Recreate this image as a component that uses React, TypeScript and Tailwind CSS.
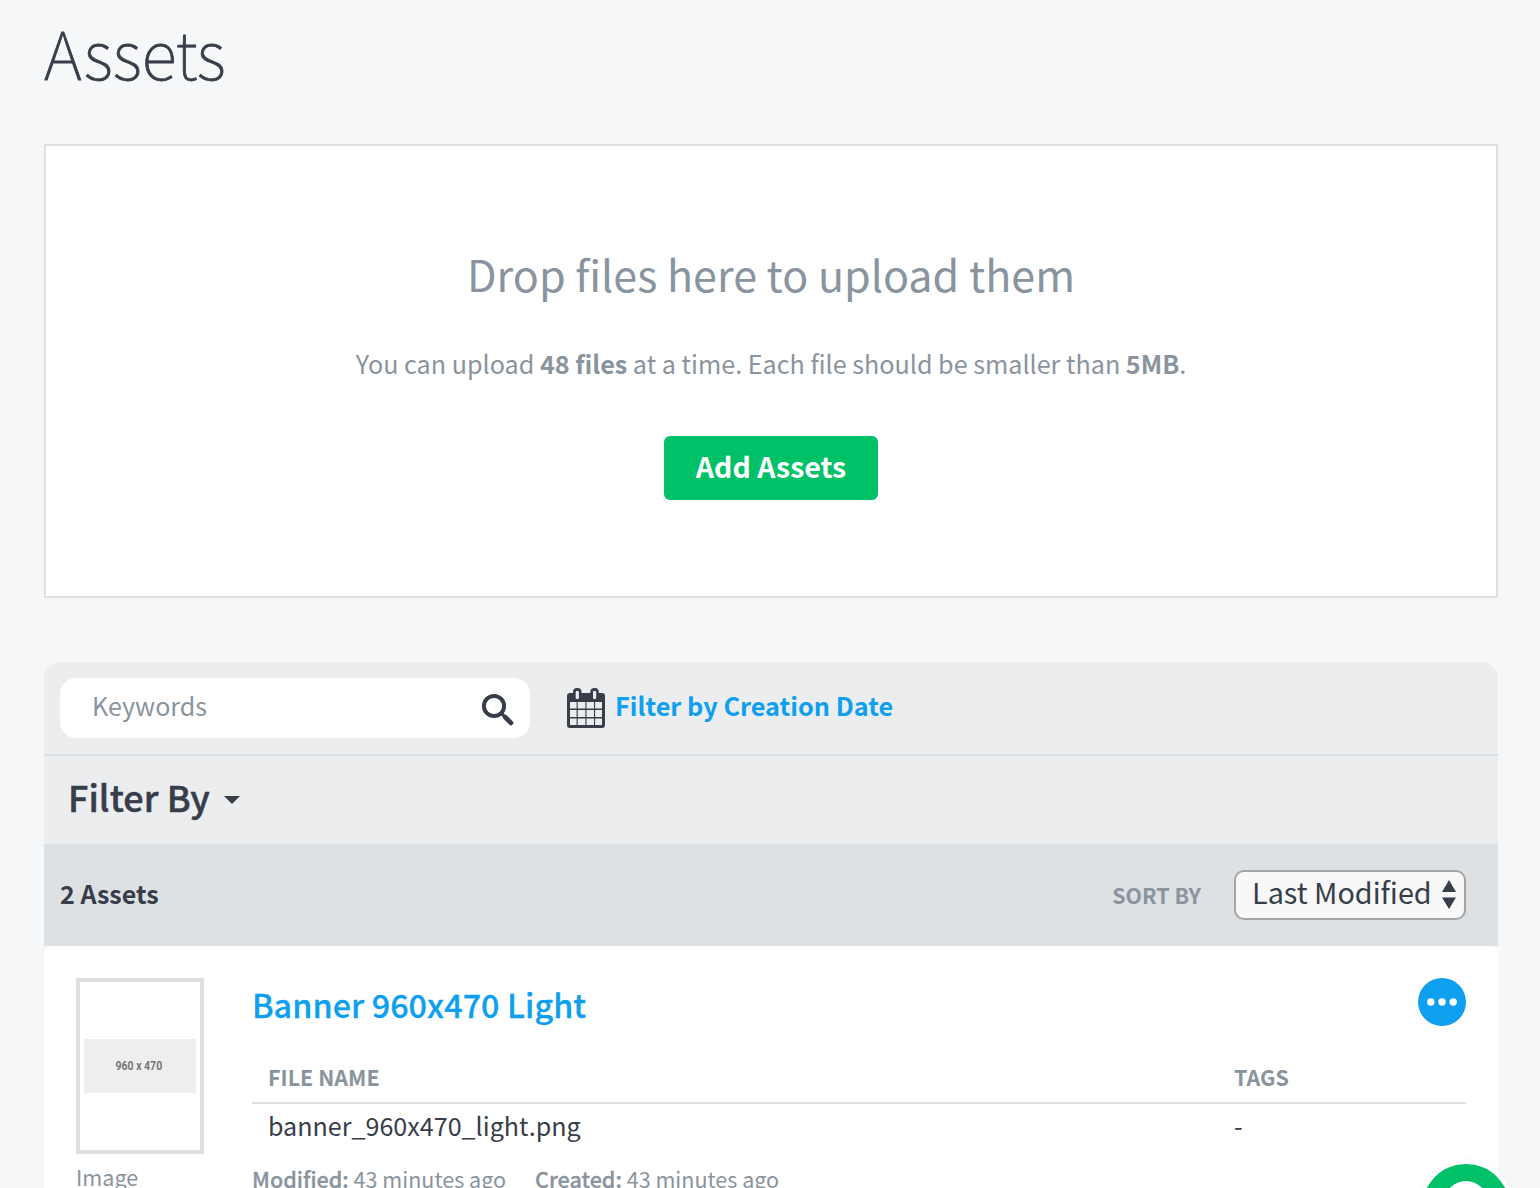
import React from 'react';

function SearchIcon() {
  return (
    <svg width="34" height="34" viewBox="0 0 34 34" fill="none" className="mt-[3px] block">
      <circle cx="13" cy="13" r="10.1" stroke="#373d49" strokeWidth="4" />
      <path d="M20.5 20.5L24 24" stroke="#373d49" strokeWidth="3.2" />
      <path d="M24.3 24.3L29.9 29.9" stroke="#373d49" strokeWidth="4.8" strokeLinecap="round" />
    </svg>
  );
}

function CalendarIcon() {
  return (
    <svg width="38" height="40" viewBox="0 0 38 40" className="block">
      <path
        fillRule="evenodd"
        fill="#373d49"
        d="M3 5H35A3 3 0 0 1 38 8V37A3 3 0 0 1 35 40H3A3 3 0 0 1 0 37V8A3 3 0 0 1 3 5ZM3 14V20.5H9.6V14ZM10.7 14V20.5H18.4V14ZM19.5 14V20.5H27V14ZM28.1 14V20.5H35V14ZM3 22V29H9.6V22ZM10.7 22V29H18.4V22ZM19.5 22V29H27V22ZM28.1 22V29H35V22ZM3 30.500V37H9.6V30.500ZM10.7 30.500V37H18.4V30.500ZM19.5 30.500V37H27V30.500ZM28.1 30.500V37H35V30.500Z"
      />
      <rect x="6" y="0" width="8.5" height="12.5" rx="4" fill="#373d49" />
      <rect x="23.3" y="0" width="8.5" height="12.5" rx="4" fill="#373d49" />
      <rect x="8.7" y="3" width="3.2" height="8" rx="1" fill="#ecedef" />
      <rect x="26" y="3" width="3.2" height="8" rx="1" fill="#ecedef" />
    </svg>
  );
}

function DropZone() {
  return (
    <section className="mt-[44px] flex h-[454px] flex-col items-center border-2 border-[#dce0e3] bg-white pt-[95px] text-[#8a949e]">
      <h2 className="h-[64px] text-[43.05px] leading-[64px] whitespace-nowrap">Drop files here to upload them</h2>
      <p className="mt-[38px] h-[40px] text-[25.15px] leading-[40px] whitespace-nowrap">
        You can upload <b className="font-bold">48 files</b> at a time. Each file should be smaller than{' '}
        <b className="font-bold">5MB</b>.
      </p>
      <button className="mt-[53px] h-[64px] w-[214px] rounded-md bg-[#00c168] pb-1 text-[28.5px] leading-[60px] font-bold text-white">
        Add Assets
      </button>
    </section>
  );
}

function Filters() {
  return (
    <div className="rounded-t-2xl bg-[#ecedef]">
      <div className="flex h-[94px] items-start border-b-2 border-[#dde0e2] pt-4 pl-4">
        <div className="flex h-[60px] w-[470px] items-center justify-between rounded-2xl bg-white pr-[15px] pl-8">
          <span className="h-[60px] text-[25.1px] leading-[54px] text-[#8a949e]">Keywords</span>
          <SearchIcon />
        </div>
        <a className="ml-[37px] flex items-start text-[#0f9fef]">
          <span className="mt-[10px]">
            <CalendarIcon />
          </span>
          <span className="ml-[10px] text-[25.3px] leading-[54px] font-bold">Filter by Creation Date</span>
        </a>
      </div>
      <div className="flex h-[88px] items-start pl-[24px]">
        <span className="text-[35.9px] leading-[80px] font-medium tracking-[0.1px] [-webkit-text-stroke:0.5px_#373d49]">
          Filter By
        </span>
        <svg width="16" height="8" viewBox="0 0 16 8" className="mt-[40px] ml-[14px]">
          <path d="M0 0H16L8 8Z" fill="#373d49" />
        </svg>
      </div>
    </div>
  );
}

function SortBar() {
  return (
    <div className="flex h-[102px] items-start justify-between bg-[#dde1e4] pr-8 pl-4">
      <span className="text-[25px] leading-[98px] font-bold">2 Assets</span>
      <div className="flex items-center">
        <span className="text-[21.4px] leading-[102px] font-bold text-[#8a949e]">SORT BY</span>
        <div className="ml-[33px] flex h-[50px] w-[232px] items-center rounded-[10px] border-2 border-[#a3a4a6] bg-[#f8f8f8] pl-4">
          <span className="h-[46px] text-[28.8px] leading-[39px] whitespace-nowrap">Last Modified</span>
          <svg width="14" height="29" viewBox="0 0 14 29" className="-mt-px ml-[10px]">
            <path d="M7 0L14 12H0ZM7 29L0 17.500H14Z" fill="#373d49" />
          </svg>
        </div>
      </div>
    </div>
  );
}

function AssetCard() {
  return (
    <article className="flex h-[320px] rounded-t-lg bg-white px-8 pt-8">
      <div className="w-[176px]">
        <div className="flex h-[176px] w-[128px] items-center justify-center border-4 border-[#dde1e4]">
          <div className="flex h-[54px] w-[112px] items-center justify-center bg-[#eee] pr-[2px] font-['Roboto',sans-serif] text-[12.5px] font-bold text-[#76777a]">
            <span className="mt-px scale-x-[0.84] whitespace-nowrap">960 x 470</span>
          </div>
        </div>
        <p className="text-[21.6px] leading-[46px] text-[#8a949e]">Image</p>
      </div>
      <div className="w-[1214px]">
        <div className="flex h-[80px] items-start justify-between">
          <h3 className="text-[32.3px] leading-[52px] font-medium tracking-[0.07px] text-[#0f9fef] [-webkit-text-stroke:0.3px_#0f9fef]">
            Banner 960x470 Light
          </h3>
          <button className="flex h-12 w-12 items-center justify-center rounded-full bg-[#0f9fef]">
            <svg width="30" height="8" viewBox="0 0 30 8" fill="#fff">
              <circle cx="3.8" cy="4" r="3.7" />
              <circle cx="15" cy="4" r="3.7" />
              <circle cx="26.200" cy="4" r="3.7" />
            </svg>
          </button>
        </div>
        <div className="flex h-[46px] border-b-2 border-[#dce0e3] pl-4 text-[21.5px] leading-[38px] font-bold text-[#8a949e]">
          <span className="w-[966px]">FILE NAME</span>
          <span>TAGS</span>
        </div>
        <div className="flex h-[54px] pl-4 text-[25.1px] leading-[42px]">
          <span className="w-[966px]">banner_960x470_light.png</span>
          <span>-</span>
        </div>
        <div className="flex gap-[29px] text-[21.55px] leading-[42px] whitespace-nowrap text-[#8a949e]">
          <p>
            <b className="font-medium [-webkit-text-stroke:0.3px_#8a949e]">Modified:</b> 43 minutes ago
          </p>
          <p>
            <b className="font-medium [-webkit-text-stroke:0.3px_#8a949e]">Created:</b> 43 minutes ago
          </p>
        </div>
      </div>
    </article>
  );
}

export default function App() {
  return (
    <main className="relative h-[1188px] w-[1540px] overflow-hidden bg-[#f5f7f9] pr-[42px] pl-[44px] font-['Noto_Sans_CJK_SC','Noto_Sans',sans-serif] text-[#373d49]">
      <h1 className="h-[100px] text-[65.6px] leading-[104px] font-thin [-webkit-text-stroke:0.8px_#373d49]">Assets</h1>
      <DropZone />
      <section className="mt-16">
        <Filters />
        <SortBar />
        <AssetCard />
      </section>
      <div className="absolute top-[1160px] left-[1418px] h-[96px] w-[96px] rounded-full bg-white p-1 shadow-[0_0_4px_rgba(0,0,0,0.04)]">
        <div className="flex h-[88px] justify-center rounded-full bg-[#00c168] pt-[17px]">
          <span className="h-[44px] w-[44px] rounded-full bg-white" />
        </div>
      </div>
    </main>
  );
}
